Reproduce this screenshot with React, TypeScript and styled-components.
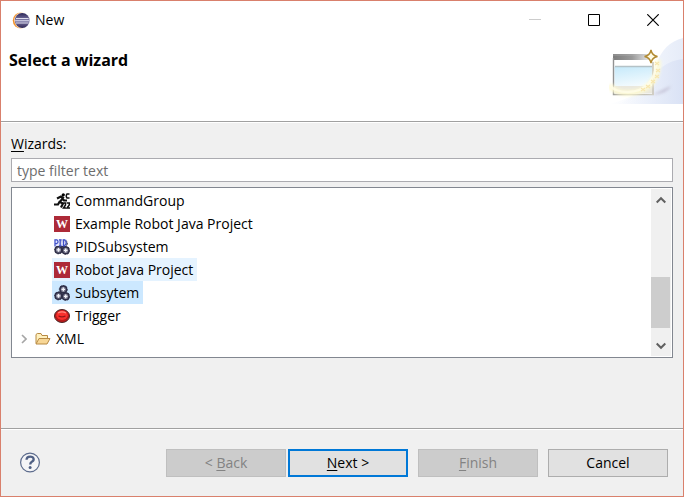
import React, { useState } from "react";
import styled, { createGlobalStyle } from "styled-components";

const GlobalStyle = createGlobalStyle`
  * { box-sizing: border-box; }
  body { margin: 0; }
  body, button, input {
    font-family: "Open Sans", "Noto Sans", sans-serif;
    font-size: 14px;
    line-height: 20px;
    font-kerning: none;
    color: #000;
  }
  button { padding: 0; }
`;

const Dialog = styled.main`
  display: flex;
  flex-direction: column;
  min-height: 100vh;
  border: 1px solid #d9806c;
  background: #f0f0f0;
`;

const TitleBar = styled.header`
  display: flex;
  align-items: center;
  height: 37px;
  padding-left: 11px;
  background: #fff;
`;

const WindowTitle = styled.span`
  flex: 1;
  padding-left: 5px;
`;

const WindowButton = styled.button`
  display: grid;
  place-items: center;
  width: 59px;
  height: 36px;
  border: 0;
  background: none;
  &:last-child { width: 60px; }
`;

const Banner = styled.section`
  display: flex;
  justify-content: space-between;
  height: 83px;
  background: #fff;
`;

const Heading = styled.h1`
  margin: 0;
  padding: 11px 8px;
  font-size: 16px;
  line-height: 22px;
  font-weight: 700;
`;

const Separator = styled.hr`
  width: 100%;
  height: 2px;
  margin: 0;
  border: 0;
  border-top: 1px solid #a0a0a0;
  background: #fff;
`;

const Body = styled.section`
  flex: 1;
  display: flex;
  flex-direction: column;
  padding: 11px 10px 0;
`;

const Mnemonic = styled.span`
  text-decoration: underline;
  text-decoration-thickness: 1px;
  text-underline-offset: 2px;
`;

const FilterInput = styled.input`
  width: 100%;
  height: 24px;
  margin: 4px 0 5px;
  padding: 0 5px;
  border: 1px solid #ababb0;
  border-radius: 0;
  background: #fff;
  outline: 0;
  &::placeholder { color: #6d6d6d; opacity: 1; }
`;

const TreeFrame = styled.div`
  display: flex;
  height: 171px;
  padding: 1px;
  border: 1px solid #828790;
  background: #fff;
`;

const TreeList = styled.ul`
  flex: 1;
  margin: 0;
  padding: 0;
  list-style: none;
`;

const Row = styled.li<{ $nested?: boolean }>`
  display: flex;
  align-items: center;
  height: 23px;
  padding-left: ${(p) => (p.$nested ? 39 : 5)}px;
`;

const RowButton = styled.button<{ $state?: "hover" | "selected" }>`
  display: flex;
  align-items: center;
  gap: 5px;
  height: 23px;
  padding: 0 4px 0 2px;
  border: 0;
  background: ${(p) =>
    p.$state === "selected" ? "#cce8ff" : p.$state === "hover" ? "#e5f3ff" : "none"};
`;

const Twisty = styled.button`
  display: grid;
  place-items: center;
  width: 11px;
  height: 16px;
  margin-right: 4px;
  border: 0;
  background: none;
`;

const WBadge = styled.span`
  display: grid;
  place-items: center;
  width: 16px;
  height: 16px;
  background: #ad2a38;
  color: #fff;
  font: bold 12px/16px "Liberation Serif", serif;
`;

const Scrollbar = styled.div`
  display: grid;
  grid-template-rows: 21px 1fr 21px;
  width: 20px;
  background: #f0f0f0;
`;

const ScrollButton = styled.button`
  display: grid;
  place-items: center;
  border: 0;
  background: none;
`;

const Track = styled.div`
  display: grid;
  grid-template-rows: 67fr 51fr 7fr;
`;

const Thumb = styled.div`
  grid-row: 2;
  margin-right: 1px;
  background: #cdcdcd;
`;

const Footer = styled.footer`
  display: flex;
  align-items: center;
  height: 66px;
  padding: 0 15px 0 18px;
`;

const HelpButton = styled.button`
  display: grid;
  place-items: center;
  width: 22px;
  height: 22px;
  margin-right: auto;
  border: 0;
  background: none;
`;

const Actions = styled.div`
  display: flex;
  gap: 10px;
`;

const Paging = styled.div`
  display: flex;
  gap: 2px;
`;

const ActionButton = styled.button<{ $primary?: boolean }>`
  width: 120px;
  height: 28px;
  border: ${(p) => (p.$primary ? "2px solid #0078d7" : "1px solid #adadad")};
  background: #e1e1e1;
  &:disabled {
    border-color: #bfbfbf;
    background: #ccc;
    color: #838383;
  }
`;

const EclipseIcon = () => (
  <svg width="18" height="18" viewBox="0 0 18 18" aria-hidden="true">
    <defs>
      <linearGradient id="rim" x1="0" x2="1">
        <stop offset="0" stopColor="#f08b20" />
        <stop offset="1" stopColor="#fff0d8" />
      </linearGradient>
      <linearGradient id="orb" x1="0" x2="0" y1="0" y2="1">
        <stop offset="0" stopColor="#2c2556" />
        <stop offset=".5" stopColor="#8580ae" />
        <stop offset="1" stopColor="#302653" />
      </linearGradient>
    </defs>
    <circle cx="8.8" cy="9.5" r="8" fill="url(#rim)" />
    <circle cx="10.2" cy="9.5" r="7.8" fill="#fff" />
    <circle cx="10.2" cy="9.5" r="7.4" fill="url(#orb)" />
    <path d="M4 7.5h12.6M3.2 9.7h14M4 12h12.6" stroke="#dddcec" strokeWidth="1.1" />
  </svg>
);

const WizardBanner = () => (
  <svg width="74" height="66" viewBox="0 0 74 66" aria-hidden="true">
    <defs>
      <linearGradient id="back" x1="0" x2="1">
        <stop offset="0" stopColor="#fff" />
        <stop offset=".6" stopColor="#f0f4fc" />
        <stop offset="1" stopColor="#e6ecf8" />
      </linearGradient>
      <linearGradient id="front" x1="0" x2="1">
        <stop offset="0" stopColor="#eaf0fb" stopOpacity="0" />
        <stop offset="1" stopColor="#dae2f5" />
      </linearGradient>
      <linearGradient id="bar" x1="0" x2="1">
        <stop offset="0" stopColor="#7c7c7c" />
        <stop offset=".5" stopColor="#999" />
        <stop offset="1" stopColor="#eee" />
      </linearGradient>
      <linearGradient id="pane" x1="0" x2=".2" y1="0" y2="1">
        <stop offset="0" stopColor="#c5e9fa" />
        <stop offset="1" stopColor="#fff" />
      </linearGradient>
      <linearGradient id="edge" x1="0" x2="1">
        <stop offset="0" stopColor="#929292" />
        <stop offset="1" stopColor="#d2cfc4" />
      </linearGradient>
      <filter id="glow" x="-30%" y="-30%" width="160%" height="160%">
        <feGaussianBlur stdDeviation="1.5" />
      </filter>
    </defs>
    <path d="M0 66C24 61 40 48 47 27 52 12 61 3 74 0v66z" fill="url(#back)" />
    <path d="M8 66C34 60 42 24 74 21v45z" fill="url(#front)" />
    <path d="m43 57 19-9q-3 7-19 9z" fill="#aaa0b8" opacity=".55" filter="url(#glow)" />
    <path d="M4 16h41v41H4z" fill="#fff" />
    <path d="M4 16h38v6H4z" fill="url(#bar)" />
    <path d="M4 17h37" stroke="#bbb" opacity=".5" />
    <path d="M5.5 28.5h39v27h-39z" fill="url(#pane)" />
    <path d="M6 48h38v7H6z" fill="#eae8de" />
    <path d="M6 28.5h38" stroke="#b4c2c7" strokeWidth="1.5" />
    <path d="M44 24v32" stroke="#d0cdc4" strokeWidth="2" />
    <path d="M4.5 20v36.5H45" fill="none" stroke="url(#edge)" strokeWidth="1.4" />
    <path d="M1 47q4 8 18 8c20 0 31-14 30-33" fill="none" stroke="#fffbd2" strokeWidth="6" opacity=".85" filter="url(#glow)" />
    <path d="M1 47q4 7 18 7c17 0 29-13 28-31" fill="none" stroke="#fffde8" strokeWidth="2.5" opacity=".8" />
    <path d="m46 24 4 3m-4 0 4-3m-3 7 4 3m-4 0 4-3m-5 6 4 3m-4 0 4-3m-8 5 4 3m-4 0 4-3m-9 5 4 3m-4 0 4-3m-9 3 4 3m-4 0 4-3" stroke="#f7e5ad" strokeWidth="1.1" />
    <path d="M42 12q1 5.500 6.500 6.500-5.500 1-6.500 6.500-1-5.500-6.500-6.500 5.500-1 6.500-6.500z" fill="#fffce6" stroke="#b28a31" strokeWidth="1.4" />
  </svg>
);

const RunnerIcon = () => (
  <svg width="16" height="16" viewBox="0 0 16 16" aria-hidden="true">
    <circle cx="9.300" cy="1.800" r="1.600" />
    <path d="M3 5.500 7 3.500l2 1.200L6 9l3 1.500L7 14.500M6 8l-2 3.500H0M8 5l2 2.500h3" fill="none" stroke="#111" strokeWidth="2.200" />
    <path d="M15.500 1H13q-1.500 2 0 4h2.500M9.500 10h2v2l-2 3h2.500M12.800 10h2.500v2l-2.300 3h3" fill="none" stroke="#111" strokeWidth="1.500" />
  </svg>
);

const Gear = ({ x, y }: { x: number; y: number }) => (
  <g transform={`translate(${x} ${y})`}>
    <circle r="3.300" fill="#77788d" stroke="#2f2f48" strokeWidth="1.500" />
    <circle r="4" fill="none" stroke="#2f2f48" strokeDasharray="1.300 1.700" />
    <path d="M-1.800 0h3.600M0-1.800v3.600" stroke="#f4f4fa" strokeWidth="1.300" />
  </g>
);

const GearsIcon = ({ pid }: { pid?: boolean }) => (
  <svg width="16" height="16" viewBox="0 0 16 16" aria-hidden="true">
    <Gear x={9.3} y={4.4} />
    <Gear x={4.5} y={10.9} />
    <Gear x={11.7} y={11.4} />
    {pid && (
      <>
        <path d="M0 0h12.500v7H0z" fill="#dfe3ff" opacity=".85" />
        <path d="M1 7.500V.8h1.800q2.500 1.900 0 3.800H1M5 .8h2.500M6.200.8v6M5 6.800h2.500M9.500.8v6h1q3.500-3 0-6z" fill="none" stroke="#3f50c8" strokeWidth="1.200" />
      </>
    )}
  </svg>
);

const TriggerIcon = () => (
  <svg width="16" height="16" viewBox="0 0 16 16" aria-hidden="true">
    <ellipse cx="8" cy="8" rx="7.500" ry="6.500" fill="#b81a1a" stroke="#4b2626" />
    <ellipse cx="8" cy="7.200" rx="5.700" ry="4.700" fill="#f9302c" />
    <path d="M4 5q4-2.200 8 0" fill="none" stroke="#ff8b80" strokeWidth="1.300" />
    <path d="M4.500 8q3.500 1.800 7 0" fill="none" stroke="#951717" strokeWidth="1.200" />
  </svg>
);

const FolderIcon = () => (
  <svg width="16" height="16" viewBox="0 0 16 16" aria-hidden="true">
    <path d="M1 12.500v-9l1.300-1H6l1 2h5.500v3" fill="#fff0bd" stroke="#b88a43" />
    <path d="m1 13 3-5.500h11L12 13z" fill="#f8d796" stroke="#b88a43" strokeLinejoin="round" />
  </svg>
);

const WizardGlyph = ({ kind }: { kind: string }) => {
  if (kind === "runner") return <RunnerIcon />;
  if (kind === "project") return <WBadge aria-hidden="true">W</WBadge>;
  if (kind === "trigger") return <TriggerIcon />;
  return <GearsIcon pid={kind === "pid"} />;
};

const wizards = [
  { name: "CommandGroup", kind: "runner" },
  { name: "Example Robot Java Project", kind: "project" },
  { name: "PIDSubsystem", kind: "pid" },
  { name: "Robot Java Project", kind: "project" },
  { name: "Subsytem", kind: "gears" },
  { name: "Trigger", kind: "trigger" },
];

export default function App() {
  const [selected, setSelected] = useState("Subsytem");
  const [hovered, setHovered] = useState("Robot Java Project");
  const [filter, setFilter] = useState("");

  return (
    <>
      <GlobalStyle />
      <Dialog>
        <TitleBar>
          <EclipseIcon />
          <WindowTitle>New</WindowTitle>
          <WindowButton aria-label="Minimize" disabled>
            <svg width="12" height="12"><path d="M0 5.500h12" stroke="#ccc" /></svg>
          </WindowButton>
          <WindowButton aria-label="Maximize">
            <svg width="12" height="12"><path d="M.5.5h11v11H.5z" fill="none" stroke="#000" /></svg>
          </WindowButton>
          <WindowButton aria-label="Close">
            <svg width="12" height="12"><path d="m.3.3 11.400 11.400m0-11.400L.3 11.700" stroke="#000" strokeWidth="1.200" /></svg>
          </WindowButton>
        </TitleBar>
        <Banner>
          <Heading>Select a wizard</Heading>
          <WizardBanner />
        </Banner>
        <Separator />
        <Body>
          <label htmlFor="filter"><Mnemonic>W</Mnemonic>izards:</label>
          <FilterInput
            id="filter"
            placeholder="type filter text"
            value={filter}
            onChange={(e) => setFilter(e.target.value)}
          />
          <TreeFrame>
            <TreeList>
              {wizards.map(({ name, kind }) => (
                <Row key={name} $nested>
                  <RowButton
                    $state={selected === name ? "selected" : hovered === name ? "hover" : undefined}
                    aria-pressed={selected === name}
                    onClick={() => setSelected(name)}
                    onMouseEnter={() => setHovered(name)}
                  >
                    <WizardGlyph kind={kind} />
                    {name}
                  </RowButton>
                </Row>
              ))}
              <Row>
                <Twisty aria-label="Expand XML">
                  <svg width="6" height="10"><path d="m1 1 4 4-4 4" fill="none" stroke="#a6a6a6" strokeWidth="1.600" /></svg>
                </Twisty>
                <RowButton><FolderIcon />XML</RowButton>
              </Row>
            </TreeList>
            <Scrollbar>
              <ScrollButton aria-label="Scroll up">
                <svg width="10" height="8"><path d="m.7 6.500 4.300-4.300 4.300 4.300" fill="none" stroke="#606060" strokeWidth="2" /></svg>
              </ScrollButton>
              <Track><Thumb /></Track>
              <ScrollButton aria-label="Scroll down">
                <svg width="10" height="8"><path d="m.7 1.500 4.300 4.300 4.300-4.300" fill="none" stroke="#606060" strokeWidth="2" /></svg>
              </ScrollButton>
            </Scrollbar>
          </TreeFrame>
        </Body>
        <Separator />
        <Footer>
          <HelpButton aria-label="Help">
            <svg width="22" height="22" viewBox="0 0 22 22">
              <circle cx="11" cy="10.500" r="9.400" fill="#f5f5f7" stroke="#5c6b8c" strokeWidth="1.200" />
              <path d="M7.500 7.800q.2-3.200 3.600-3.200c4 0 4.500 3.400 2 5q-1.900 1.100-1.900 3" fill="none" stroke="#506084" strokeWidth="2.300" />
              <circle cx="11.100" cy="15.500" r="1.500" fill="#506084" />
            </svg>
          </HelpButton>
          <Actions>
            <Paging>
              <ActionButton disabled>&lt; <Mnemonic>B</Mnemonic>ack</ActionButton>
              <ActionButton $primary><Mnemonic>N</Mnemonic>ext &gt;</ActionButton>
            </Paging>
            <ActionButton disabled><Mnemonic>F</Mnemonic>inish</ActionButton>
            <ActionButton>Cancel</ActionButton>
          </Actions>
        </Footer>
      </Dialog>
    </>
  );
}
